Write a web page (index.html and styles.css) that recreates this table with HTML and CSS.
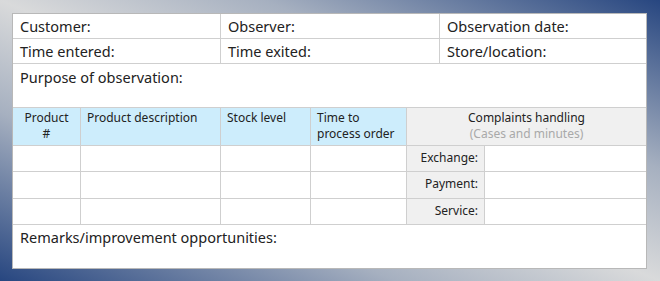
FILE: index.html
```html
<!DOCTYPE html>
<html>
<head>
<meta charset="utf-8">
<link rel="stylesheet" href="styles.css">
</head>
<body>
<div class="sheet">
  <div class="row info">
    <div class="cell c1">Customer:</div>
    <div class="cell c2">Observer:</div>
    <div class="cell c3">Observation date:</div>
  </div>
  <div class="row info">
    <div class="cell c1">Time entered:</div>
    <div class="cell c2">Time exited:</div>
    <div class="cell c3">Store/location:</div>
  </div>
  <div class="row note">Purpose of observation:</div>
  <div class="grid">
    <div class="h blue center">Product<br>#</div>
    <div class="h blue">Product description</div>
    <div class="h blue">Stock level</div>
    <div class="h blue">Time to<br>process order</div>
    <div class="h gray center span2">Complaints handling<br><span class="muted">(Cases and minutes)</span></div>

    <div class="d"></div><div class="d"></div><div class="d"></div><div class="d"></div>
    <div class="d lbl">Exchange:</div><div class="d last"></div>

    <div class="d"></div><div class="d"></div><div class="d"></div><div class="d"></div>
    <div class="d lbl">Payment:</div><div class="d last"></div>

    <div class="d"></div><div class="d"></div><div class="d"></div><div class="d"></div>
    <div class="d lbl">Service:</div><div class="d last"></div>
  </div>
  <div class="row note remarks">Remarks/improvement opportunities:</div>
</div>
</body>
</html>
```
FILE: styles.css
```css
html, body {
  margin: 0;
  height: 100%;
}
body {
  width: 660px;
  height: 281px;
  overflow: hidden;
  background: linear-gradient(to top right, #274680 0%, #a6b0c0 30%, #d9dadb 50%, #a6b0c0 70%, #274680 100%);
  font-family: "Noto Sans", "Open Sans", sans-serif;
  color: #222;
  padding: 13px 12px 0 12px;
  box-sizing: border-box;
}
.sheet {
  width: 635px;
  background: #fff;
  border: 1px solid #b8b8b8;
  box-sizing: border-box;
}
.row {
  border-bottom: 1px solid #cfcfcf;
  box-sizing: border-box;
}
.info {
  display: flex;
  height: 25px;
}
.cell {
  font-size: 14.5px;
  line-height: 25px;
  padding: 0 7px;
  box-sizing: border-box;
}
.c1 { width: 208px; border-right: 1px solid #cfcfcf; }
.c2 { width: 219px; border-right: 1px solid #cfcfcf; }
.c3 { flex: 1; }
.note {
  height: 44px;
  font-size: 14.5px;
  line-height: 18px;
  padding: 4px 7px 0;
}
.remarks {
  border-bottom: none;
  height: 43px;
  padding-top: 3px;
}
.grid {
  display: grid;
  grid-template-columns: 68px 140px 90px 96px 78px 1fr;
  grid-template-rows: 38px 26px 27px 25px;
  border-bottom: 1px solid #cfcfcf;
}
.h, .d {
  border-right: 1px solid #cfcfcf;
  border-bottom: 1px solid #cfcfcf;
  font-size: 12px;
  line-height: 16px;
}
.grid > div:nth-last-child(-n+6) { border-bottom: none; }
.h { padding: 2px 6px 0; }
.blue { background: #cdedfc; }
.gray { background: #f0f0f0; border-right: none; }
.center { text-align: center; }
.span2 { grid-column: span 2; }
.muted { color: #a9a9a9; }
.lbl {
  background: #f0f0f0;
  text-align: right;
  padding: 4px 6px 0 0;
}
.last { border-right: none; }
```
